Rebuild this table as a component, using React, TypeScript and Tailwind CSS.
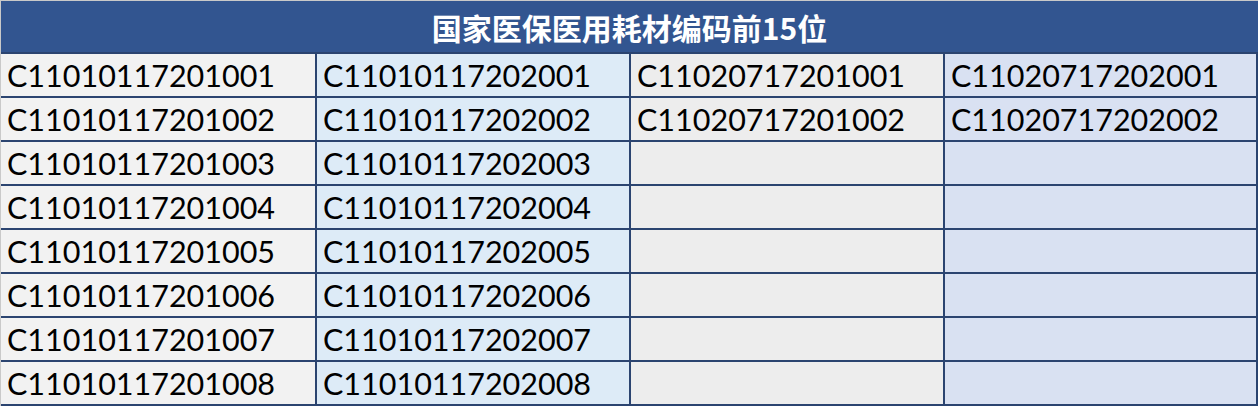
const rows = [
  ["C11010117201001", "C11010117202001", "C11020717201001", "C11020717202001"],
  ["C11010117201002", "C11010117202002", "C11020717201002", "C11020717202002"],
  ["C11010117201003", "C11010117202003", "", ""],
  ["C11010117201004", "C11010117202004", "", ""],
  ["C11010117201005", "C11010117202005", "", ""],
  ["C11010117201006", "C11010117202006", "", ""],
  ["C11010117201007", "C11010117202007", "", ""],
  ["C11010117201008", "C11010117202008", "", ""],
];

const colBg = ["bg-[#f2f2f2]", "bg-[#ddebf7]", "bg-[#ededed]", "bg-[#d9e1f2]"];

export default function App() {
  return (
    <div className="w-[1258px] h-[406px] bg-white border-t border-[#c9c9c9] flex flex-col">
      <div className="h-[51px] shrink-0 bg-[#325590] border-l border-[#c9c9c9] flex items-center justify-center text-white font-bold text-[30px] font-['Noto_Sans_CJK_SC',sans-serif] leading-none">
        国家医保医用耗材编码前15位
      </div>
      <div className="grid grid-cols-[314px_312px_312px_311px] gap-[2px] bg-[#2b4470] pt-[2px] pr-[2px] pb-[2px] border-l border-[#c9c9c9] font-['Lato',sans-serif] text-[30.5px] text-black">
        {rows.map((row, r) =>
          row.map((cell, c) => (
            <div key={`${r}-${c}`} className={`${colBg[c]} h-[42px] flex items-center pl-[6px] leading-none`}>
              {cell}
            </div>
          ))
        )}
      </div>
    </div>
  );
}
